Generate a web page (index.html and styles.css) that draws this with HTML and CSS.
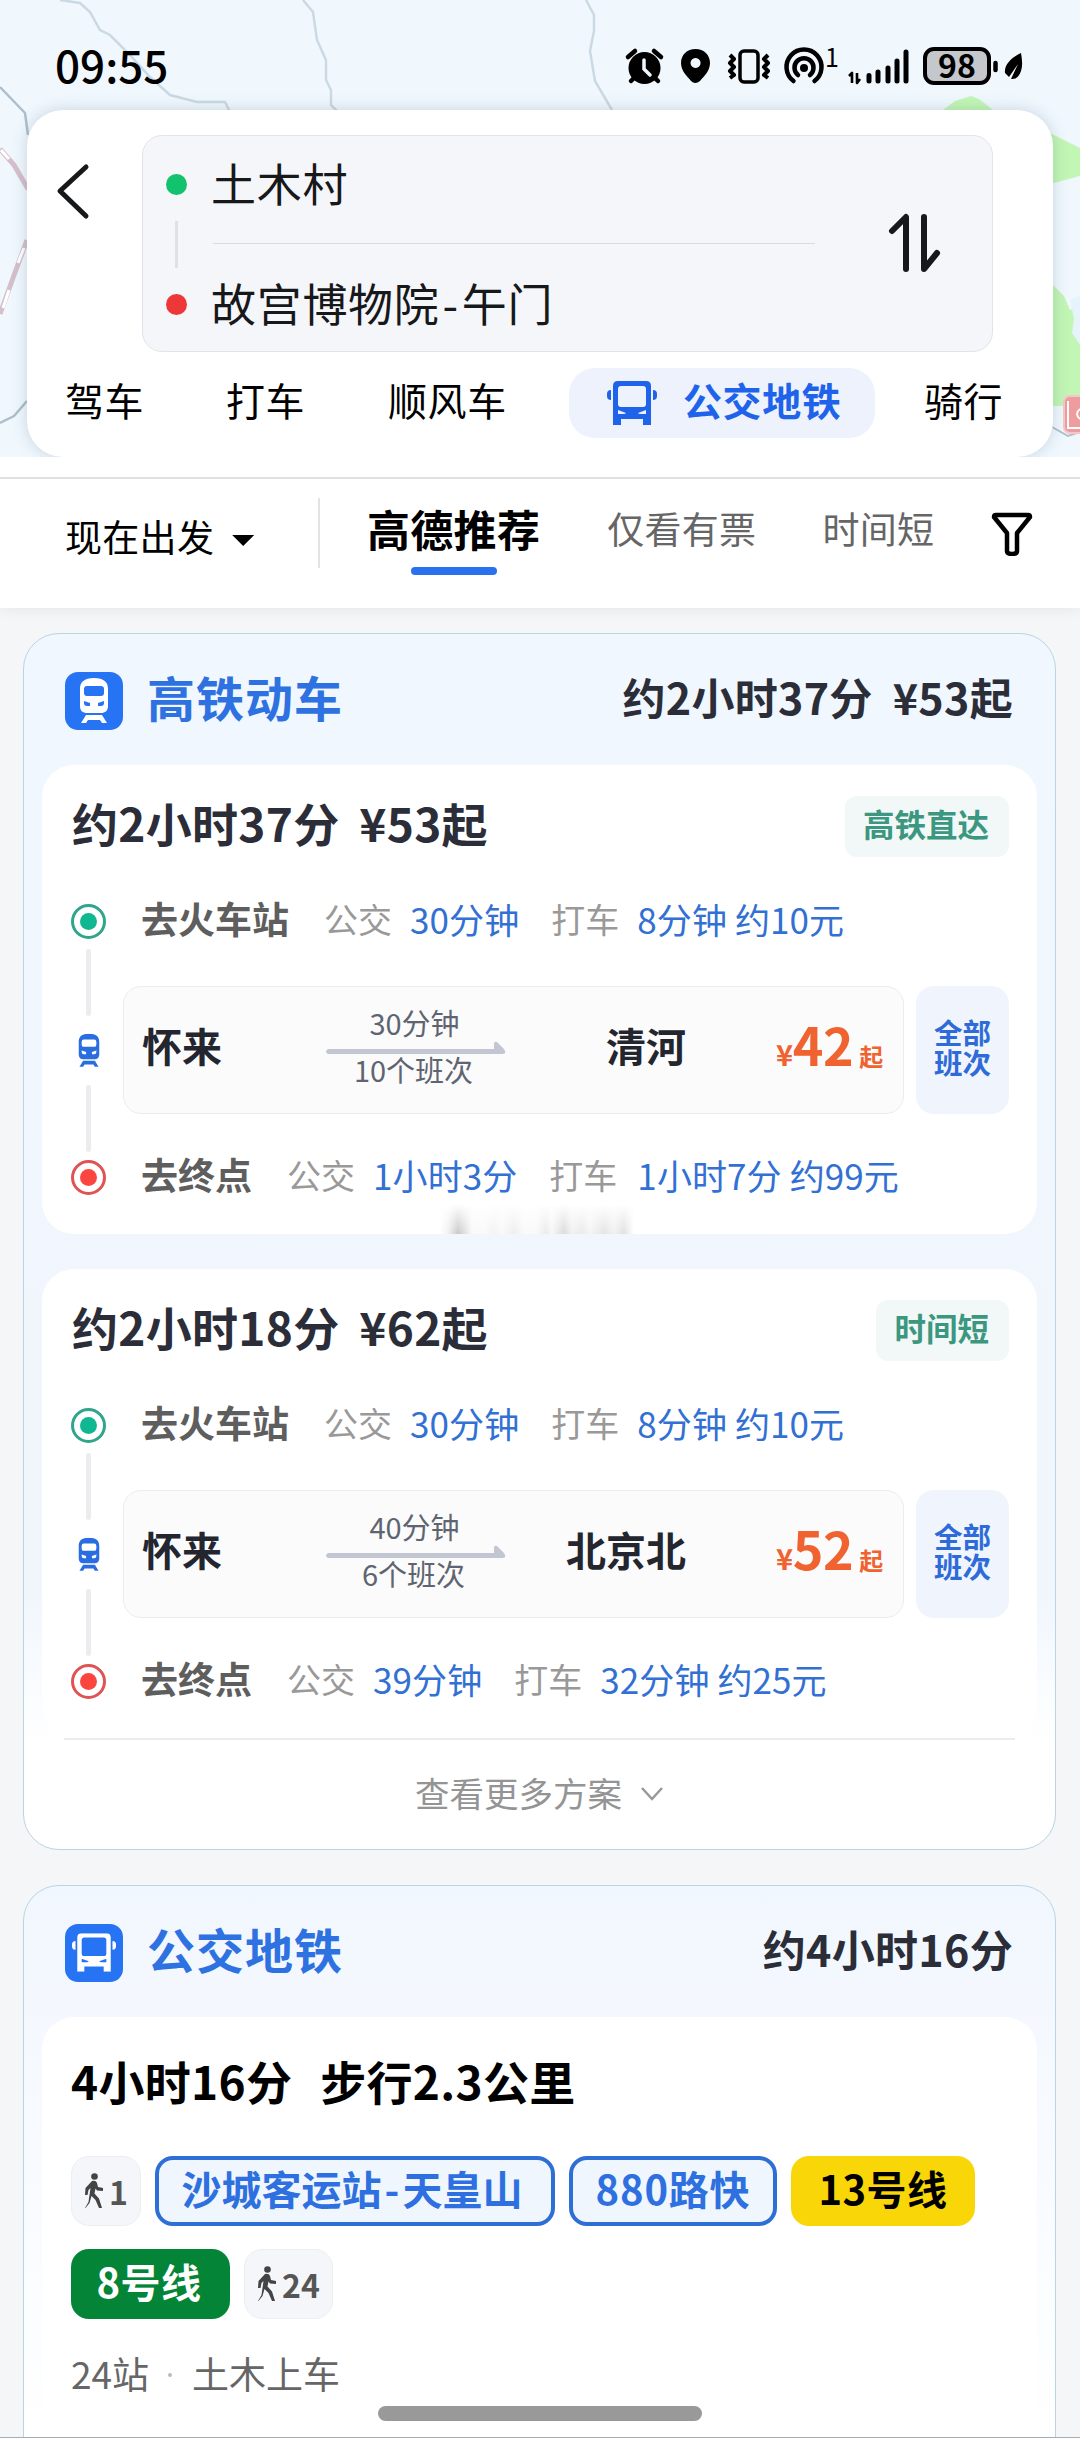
FILE: index.html
```html
<!DOCTYPE html>
<html lang="zh-CN">
<head>
<meta charset="utf-8">
<title>路线规划</title>
<link rel="stylesheet" href="styles.css">
</head>
<body>
<svg class="defs" width="0" height="0" aria-hidden="true">
  <defs>
    <symbol id="train" viewBox="0 0 30 46">
      <path fill-rule="evenodd" d="M15 0C5 0 1 4 1 11v17c0 5 3 7 7 7h14c4 0 7-2 7-7V11C29 4 25 0 15 0zM8 8h14q3 0 3 3v4q0 3-3 3H8q-3 0-3-3v-4q0-3 3-3zM5 23l6 2v3H8q-3 0-3-3zM25 23l-6 2v3h3q3 0 3-3z"/>
      <path d="M7 37h16l5 8h-5l-2-3H9l-2 3H2z"/>
    </symbol>
    <symbol id="bus" viewBox="0 0 50 44">
      <path fill-rule="evenodd" d="M11 0h28q5 0 5 5v39h-8v-6H14v6H6V5q0-5 5-5zM14 5q-3 0-3 3v15q0 3 3 3h22q3 0 3-3V8q0-3-3-3zM11 29v4h5q3 0 3-1zM39 29v4h-5q-3 0-3-1z"/>
      <path d="M4 9v10q-4 0-4-4v-2q0-4 4-4zM46 9v10q4 0 4-4v-2q0-4-4-4z"/>
    </symbol>
    <symbol id="walk" viewBox="0 0 20 36">
      <circle cx="10.500" cy="3.500" r="3.300"/>
      <path d="M8 8q4-1 5 2l1 4 5 1v3l-6-.5-1.500-2-1 5 4.500 5 3 9.500h-3l-3.500-8-4-4-2 7-4 5H1l3.500-6 2-14-2 2-1 5H1l.5-7z"/>
    </symbol>
  </defs>
</svg>

<div class="screen">
  <header class="map">
    <svg class="map-art" viewBox="0 0 1080 457" fill="none">
      <path d="M60 0l20 3 10 9 10 18 10 5 20 20 20 22 20 18 27 7h28l10 20 10 7M303 0l10 12 4 28 9 20v20l5 10v15l8 8M586 0l8 15v16l-4 20 5 30 17 29" stroke="#cbd9e2" stroke-width="2.500"/>
      <path d="M0 87l25 26 3 22M0 423l14-7 13-15" stroke="#adbfcb" stroke-width="2.500"/>
      <path d="M0 149l14 16 14 24M27 240l-14 38-13 36" stroke="#d5bfca" stroke-width="5"/>
      <path d="M1 150l8 9M24 248l-6 15M9 290l-6 18" stroke="#fff" stroke-width="3"/>
      <path d="M943 110l12-9 16-5 8 3 14 11zM1050 133l30 15v28l-30 8zM1052 284l12 12 6 14 10-4v100h-28z" fill="#c2f6b5"/>
      <path d="M1070 300l10-5v50l-8-12 2-14z" fill="#e5f3fb"/>
      <path d="M1052 427l16 9 12-4" stroke="#adbfcb" stroke-width="2"/>
      <rect x="1064" y="396" width="40" height="37" rx="6" fill="#ef9c9f" stroke="#f7c6c8" stroke-width="2"/>
      <path d="M1080 409q-6 5 0 10M1068 401v27h12" stroke="#fff" stroke-width="2"/>
    </svg>

    <div class="status">
      <span class="clock">09:55</span>
      <svg class="status-icons" viewBox="0 0 400 44" width="400" height="44">
        <circle cx="24.500" cy="24" r="16"/>
        <path d="M8 13l7-6M41 13l-7-6M11 37l5-5M38 37l-5-5" stroke="#000" stroke-width="4.500" stroke-linecap="round"/>
        <path d="M24 16v9l6 6" fill="none" stroke="#eff7fe" stroke-width="3.500" stroke-linecap="round"/>
        <path fill-rule="evenodd" d="M75.500 5C67 5 61 11 61 19c0 8 6 13 10 18q4 4 9 0c4-5 10-10 10-18 0-8-6-14-14.500-14zm0 9a5 5 0 1 0 .1 0z"/>
        <rect x="120" y="7" width="18" height="31" rx="4" fill="none" stroke="#000" stroke-width="3.500"/>
        <path d="M110 11l4 4-4 4 4 4-4 4 4 4-4 3M148 11l-4 4 4 4-4 4 4 4-4 4 4 3" fill="none" stroke="#000" stroke-width="4" stroke-linejoin="round"/>
        <g fill="none" stroke="#000" stroke-width="4.500" stroke-linecap="round">
          <path d="M173.500 37a17.500 17.500 0 1 1 21 0M178 31a9.500 9.500 0 1 1 12 0"/>
        </g>
        <circle cx="184" cy="24" r="4"/>
        <text x="205" y="23" class="spot-count">1</text>
        <path d="M229 32l3-3v10M240 35l-3 4V29" fill="none" stroke="#000" stroke-width="2.600" stroke-linejoin="round"/>
        <path d="M249 31.500v5.500M258 28v9M268 24v13M277 17v20M286 8v29" stroke="#000" stroke-width="5" stroke-linecap="round"/>
        <rect x="305" y="5" width="64" height="34" rx="9" fill="#c4c8cd" stroke="#000" stroke-width="4"/>
        <text x="337" y="33.500" class="battery-text">98</text>
        <path d="M375.500 19v7" stroke="#000" stroke-width="4.500" stroke-linecap="round"/>
        <path d="M401 9c-10 5-17 12-16 20l4 4 9-13-7 15q7 1 10-8c2-6 1-12 0-18z"/>
      </svg>
    </div>

    <div class="planner">
      <div class="planner-top">
        <svg class="back" viewBox="0 0 36 60" width="36" height="60"><path d="M31 6L5 30l26 25" fill="none" stroke="#17181a" stroke-width="5" stroke-linecap="round" stroke-linejoin="round"/></svg>
        <div class="route-box">
          <div class="rail"><i class="dot green"></i><i class="stem"></i><i class="dot red"></i></div>
          <div class="places">
            <div class="place">土木村</div>
            <div class="place to">故宫博物院<span class="dash">-</span>午门</div>
          </div>
          <svg class="swap" viewBox="0 0 54 64" width="54" height="64"><path d="M5 20L19 6v52M37 6v52l13-16" fill="none" stroke="#17181a" stroke-width="6" stroke-linecap="round" stroke-linejoin="round"/></svg>
        </div>
      </div>
      <nav class="modes">
        <span>驾车</span><span>打车</span><span>顺风车</span>
        <span class="on"><svg width="50" height="44"><use href="#bus"/></svg>公交地铁</span>
        <span>骑行</span>
      </nav>
    </div>
  </header>

  <div class="filters">
    <div class="depart">现在出发<i class="caret"></i></div>
    <span class="sort on">高德推荐</span>
    <span class="sort second">仅看有票</span>
    <span class="sort third">时间短</span>
    <svg class="funnel" viewBox="0 0 42 44" width="42" height="44"><path d="M3 5q0-2 2-2h32q2 0 2 2L26 21v18q0 3-5 3t-5-3V21z" fill="none" stroke="#000" stroke-width="4.500" stroke-linejoin="round"/></svg>
  </div>

  <main>
    <section class="group rail-group">
      <div class="group-head">
        <span class="badge"><svg width="30" height="46"><use href="#train"/></svg></span>
        <h2>高铁动车</h2>
        <strong>约2小时37分 ¥53起</strong>
      </div>

      <article class="plan">
        <div class="plan-head"><h3>约2小时37分 ¥53起</h3><span class="tag">高铁直达</span></div>
        <div class="leg"><i class="ring start"></i><b>去火车站</b><em>公交</em><a>30分钟</a><em class="next">打车</em><a>8分钟 约10元</a></div>
        <div class="ride">
          <div class="line"><i></i><svg width="22" height="35" viewBox="0 0 30 46"><use href="#train"/></svg><i></i></div>
          <div class="ticket">
            <b class="from">怀来</b>
            <div class="span"><span>30分钟</span><svg width="180" height="13" viewBox="0 0 180 13"><path d="M2 8h166V3q0-3 3-2l7 7q3 5-1 5H2q-4-2 0-5z"/></svg><span>10个班次</span></div>
            <b class="dest">清河</b>
            <div class="price"><small>¥</small>42<small class="from-price">起</small></div>
          </div>
          <div class="all">全部<br>班次</div>
        </div>
        <div class="leg"><i class="ring end"></i><b>去终点</b><em>公交</em><a>1小时3分</a><em class="next">打车</em><a class="late">1小时7分 约99元</a></div>
        <div class="smudge"></div>
      </article>

      <article class="plan">
        <div class="plan-head"><h3>约2小时18分 ¥62起</h3><span class="tag">时间短</span></div>
        <div class="leg"><i class="ring start"></i><b>去火车站</b><em>公交</em><a>30分钟</a><em class="next">打车</em><a>8分钟 约10元</a></div>
        <div class="ride">
          <div class="line"><i></i><svg width="22" height="35" viewBox="0 0 30 46"><use href="#train"/></svg><i></i></div>
          <div class="ticket">
            <b class="from">怀来</b>
            <div class="span"><span>40分钟</span><svg width="180" height="13" viewBox="0 0 180 13"><path d="M2 8h166V3q0-3 3-2l7 7q3 5-1 5H2q-4-2 0-5z"/></svg><span>6个班次</span></div>
            <b class="dest">北京北</b>
            <div class="price"><small>¥</small>52<small class="from-price">起</small></div>
          </div>
          <div class="all">全部<br>班次</div>
        </div>
        <div class="leg"><i class="ring end"></i><b>去终点</b><em>公交</em><a>39分钟</a><em class="next">打车</em><a>32分钟 约25元</a></div>
      </article>

      <div class="more">查看更多方案<svg width="24" height="16" viewBox="0 0 24 16"><path d="M2 2l10 11L22 2" fill="none" stroke="#999" stroke-width="2.500"/></svg></div>
    </section>

    <section class="group bus-group">
      <div class="group-head">
        <span class="badge"><svg width="44" height="39" viewBox="0 0 50 44"><use href="#bus"/></svg></span>
        <h2>公交地铁</h2>
        <strong>约4小时16分</strong>
      </div>
      <article class="plan transit">
        <h3><span>4小时16分</span><span>步行2.3公里</span></h3>
        <div class="chips">
          <span class="chip walk"><svg width="20" height="36"><use href="#walk"/></svg>1</span>
          <span class="chip bus wide">沙城客运站<span class="dash">-</span>天皇山</span>
          <span class="chip bus route">880路快</span>
          <span class="chip line13">13号线</span>
          <span class="chip line8">8号线</span>
          <span class="chip walk long"><svg width="20" height="36"><use href="#walk"/></svg>24</span>
        </div>
        <div class="stops"><span>24站</span><i></i><span>土木上车</span></div>
      </article>
    </section>
  </main>
  <div class="home-bar"></div>
</div>
</body>
</html>
```
FILE: styles.css
```css
* { box-sizing: border-box; }
body {
  margin: 0;
  background: #f4f6f8;
  color: #000;
  font-family: "Noto Sans CJK SC", sans-serif;
}
.defs { position: absolute; }
h2, h3 { margin: 0; }
em, i { font-style: normal; }
svg { display: block; flex: none; }
.dash { padding: 0 3px; }

.screen {
  position: relative;
  width: 1080px;
  height: 2438px;
  overflow: hidden;
  border-bottom: 1px solid #a9adb2;
}

/* Map strip with status bar and route planner */
.map {
  position: relative;
  height: 457px;
  padding: 0 27px;
  background: #f0f8fe;
  overflow: hidden;
}
.map-art { position: absolute; left: 0; top: 0; width: 1080px; height: 457px; }
.status {
  position: relative;
  height: 110px;
  padding: 1px 0 0 28px;
  display: flex;
  justify-content: space-between;
}
.clock { margin-top: 31px; font-size: 44px; line-height: 64px; font-weight: 500; }
.status-icons { margin: 43px 33px 0 0; overflow: visible; }
.spot-count { font-size: 25px; }
.battery-text { font-size: 32px; font-weight: 700; text-anchor: middle; }

.planner {
  position: relative;
  height: 347px;
  border-radius: 36px;
  background: #fff;
  box-shadow: 0 0 16px rgba(60, 80, 110, .22);
  padding-top: 25px;
}
.planner-top { display: flex; }
.back { margin: 26px 0 0 28px; }
.route-box {
  display: flex;
  width: 851px;
  height: 217px;
  margin-left: 51px;
  border: 1px solid #e2e4e9;
  border-radius: 20px;
  background: #f4f6fa;
}
.rail { width: 68px; padding: 38px 0 0 23px; }
.dot { display: block; width: 21px; height: 21px; border-radius: 50%; }
.green { background: #12c26c; }
.red { background: #ee3837; }
.stem { display: block; width: 3px; height: 47px; margin: 26px 0 26px 9px; background: #e0e1e5; }
.places { width: 604px; }
.place { height: 107px; padding: 14px 0 0; font-size: 45px; line-height: 66px; letter-spacing: .7px; color: #17181a; white-space: nowrap; }
.to { margin-left: 2px; padding-top: 26px; border-top: 1px solid #d9dbe0; text-indent: -2px; }
.to .dash { padding: 0 3px; }
.swap { margin: 75px 0 0 72px; }

.modes { position: relative; display: flex; align-items: center; height: 69px; margin-top: 16px; padding-left: 38px; font-size: 39px; letter-spacing: .6px; }
.modes span { flex: none; width: 161px; line-height: 58px; margin-top: -8px; white-space: nowrap; }
.modes span:nth-child(2) { width: 162px; }
.modes span:nth-child(3) { width: 181px; }
.modes .on {
  display: flex;
  align-items: center;
  gap: 26px;
  width: 306px;
  height: 70px;
  margin: 0 49px 0 0;
  padding: 0 0 7px 38px;
  border-radius: 26px;
  background: #edf2fc;
  color: #1f63ea;
  fill: #1f63ea;
  font-weight: 700;
}
.modes .on svg { margin-top: 8px; }

/* Departure time and sort filters */
.filters {
  position: relative;
  display: flex;
  align-items: flex-start;
  height: 131px;
  margin-top: 20px;
  padding-top: 19px;
  border-top: 2px solid #e1e1e1;
  background: #fff;
  box-shadow: 0 4px 12px rgba(0, 0, 0, .05);
}
.filters::before { content: ""; position: absolute; left: 0; right: 0; top: -22px; height: 20px; background: #fff; }
.depart {
  display: flex;
  width: 320px;
  height: 70px;
  padding: 11px 0 0 65px;
  border-right: 2px solid #e3e3e3;
  font-size: 37px;
  line-height: 54px;
  letter-spacing: .3px;
}
.caret { width: 22px; height: 11px; margin: 26px 0 0 18px; background: #000; clip-path: polygon(0 0, 100% 0, 50% 100%); }
.sort { font-size: 37px; line-height: 54px; letter-spacing: .3px; color: #666; margin-top: 3px; white-space: nowrap; }
.sort.on {
  position: relative;
  margin: -1px 0 0 47px;
  font-size: 43px;
  line-height: 62px;
  font-weight: 700;
  color: #000;
}
.sort.on::after { content: ""; position: absolute; left: 44px; top: 70px; width: 86px; height: 8px; border-radius: 4px; background: #2b70ee; }
.second { margin-left: 67px; }
.third { margin-left: 66px; }
.funnel { margin: 14px 0 0 57px; }

/* Result groups */
main { display: flex; flex-direction: column; gap: 35px; padding: 25px 24px 0 23px; }
.group {
  border: 1px solid #b9d4e4;
  border-radius: 36px;
  padding: 0 18px;
}
.rail-group { height: 1217px; background: linear-gradient(#f1f7fe 0, #f1f6fd 960px, #fff 1110px); }
.bus-group { height: 620px; background: linear-gradient(#f1f7fe 0, #f5f8fe 150px, #fff 560px); }
.group-head { display: flex; align-items: center; height: 131px; padding: 0 24px 0 23px; }
.badge { display: flex; align-items: center; justify-content: center; width: 58px; height: 58px; margin-top: 2px; border-radius: 13px; background: #2673f4; fill: #fff; }
.group-head h2 { margin: -7px 0 0 24px; font-size: 48px; line-height: 70px; letter-spacing: 1px; font-weight: 700; color: #2e72e2; }
.group-head strong { margin: -7px 0 0 auto; font-size: 43px; line-height: 62px; letter-spacing: .3px; color: #2b2e38; word-spacing: 10px; white-space: nowrap; }

.plan { position: relative; height: 469px; padding: 31px 28px 0 30px; border-radius: 32px; background: #fff; }
.plan + .plan { margin-top: 35px; }
.plan-head { display: flex; justify-content: space-between; height: 61px; }
.plan h3 { margin-top: -7px; font-size: 46px; line-height: 66px; letter-spacing: .3px; color: #2b2e38; word-spacing: 9px; white-space: nowrap; }
.tag { height: 61px; padding: 0 20px 0 18px; border-radius: 12px; background: #f2f8f7; color: #3b9780; font-size: 31.500px; line-height: 55px; font-weight: 700; }

.leg { display: flex; align-items: center; height: 52px; margin-top: 38px; font-size: 35px; white-space: nowrap; }
.ring { width: 35px; height: 35px; margin-left: -1px; border: 3px solid; border-radius: 50%; padding: 6px; background-clip: content-box; }
.start { border-color: #2fa68a; background-color: #0fb890; }
.end { border-color: #e05353; background-color: #fb4640; }
.leg b { margin: -6px 35px 0 35px; font-size: 37px; color: #5e5e5e; }
.leg em { margin: -6px 18px 0 0; font-size: 34px; color: #999; }
.leg em.next { margin-left: 32px; }
.leg a { margin-top: -6px; color: #3270d3; letter-spacing: .1px; }
.leg a.late { margin-left: 2px; }

.ride { display: flex; height: 128px; margin-top: 39px; }
.line { width: 51px; height: 202px; margin: -37px 0 0 0; padding-left: 5px; fill: #2a6de0; }
.line i { display: block; width: 5px; height: 67px; margin-left: 9px; border-radius: 3px; background: #ececef; }
.line svg { margin: 17px 0 17px 1px; }
.ticket {
  display: flex;
  align-items: center;
  width: 781px;
  height: 128px;
  border: 1px solid #ececef;
  border-radius: 18px;
  background: #fbfbfc;
}
.ticket b { margin-top: -10px; font-size: 40px; color: #23262f; white-space: nowrap; }
.from { width: 202px; padding-left: 18px; }
.span { display: flex; flex-direction: column; align-items: center; width: 180px; margin-top: -10px; color: #5f6570; font-size: 29px; line-height: 34px; fill: #c2c6d2; }
.span span:first-child { height: 36px; margin-left: -3px; }
.span span:last-child { margin: -2px 0 0 -5px; }
.dest { width: 180px; text-align: right; }
.price { display: flex; align-items: baseline; margin: -13px 0 0 90px; color: #f0622f; font-size: 52px; font-weight: 700; letter-spacing: -.4px; }
.price small { font-size: 29px; }
.price .from-price { margin-left: 6px; font-size: 24px; }
.all { width: 93px; margin-left: 12px; padding-top: 31px; border-radius: 18px; background: #f0f5fd; color: #2e6bd8; font-size: 28.500px; line-height: 30px; font-weight: 700; text-align: center; }
.ride + .leg { margin-top: 37px; }

.smudge {
  position: absolute;
  left: 398px;
  bottom: 0;
  width: 194px;
  height: 30px;
  background: linear-gradient(90deg, transparent 0, #eee 8px, #bbb 18px, #ddd 26px, #f8f8f8 32px 44px, #f0f0f0 54px, #f7f7f7 62px, #eaeaea 74px, #f8f8f8 84px 96px, #e6e6e6 106px, #f5f5f5 112px, #d2d2d2 124px, #eee 132px, #e4e4e4 142px, #f2f2f2 150px, #ddd 164px, #eee 174px, #d8d8d8 184px, transparent);
  -webkit-mask-image: linear-gradient(transparent, rgba(0, 0, 0, .8));
  mask-image: linear-gradient(transparent, rgba(0, 0, 0, .8));
}

.more {
  display: flex;
  align-items: center;
  justify-content: center;
  gap: 18px;
  height: 106px;
  margin: 0 22px;
  padding-bottom: 1px;
  border-top: 2px solid #ececee;
  position: relative;
  color: #949494;
  font-size: 34.500px;
}
.more svg { margin-top: 5px; }

/* Bus and subway result */
.plan.transit { height: 480px; padding: 30px 27px 0 29px; background: #fff; }
.transit h3 { display: flex; gap: 28px; margin: 0; color: #000; font-size: 46px; }
.chips { display: flex; flex-wrap: wrap; gap: 23px 14px; margin-top: 43px; }
.chip { display: flex; align-items: center; justify-content: center; height: 70px; padding-bottom: 6px; border-radius: 18px; font-size: 40px; font-weight: 700; white-space: nowrap; }
.chip.walk { width: 70px; gap: 5px; border: 1px solid #edeef1; background: #f5f6f9; color: #555; fill: #444; font-size: 32px; padding: 0; line-height: 44px; }
.chip.walk.long { width: 89px; }
.chip.bus { border: 4px solid #2e6fd6; background: #f0f6fe; color: #2e70e0; }
.wide { width: 400px; padding-right: 6px; }
.route { width: 208px; letter-spacing: .8px; }
.line13 { width: 184px; background: #f9d608; letter-spacing: .5px; }
.line8 { width: 159px; padding-right: 3px; background: #038437; color: #fff; letter-spacing: .5px; }
.stops { display: flex; align-items: center; height: 54px; margin-top: 27px; font-size: 37px; color: #666; }
.stops i { width: 4px; height: 4px; margin: 4px 20px 0 19px; border-radius: 50%; background: #bbb; }

.home-bar { position: absolute; left: 378px; top: 2406px; width: 324px; height: 15px; border-radius: 8px; background: #999; }
```
